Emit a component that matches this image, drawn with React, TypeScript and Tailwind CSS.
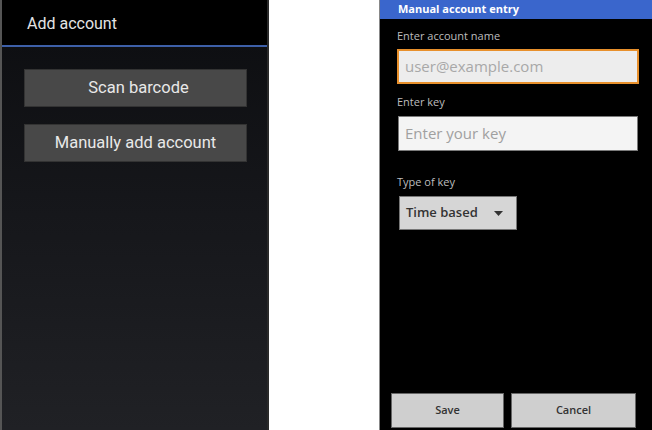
export default function App() {
  return (
    <div className="flex h-[430px] w-[652px] overflow-hidden bg-white">
      {/* left phone: add account */}
      <div className="flex h-full w-[269px] flex-col border-x-2 border-l-[#555] border-r-[#2a2a2a] bg-gradient-to-b from-[#0c0d10] via-[#16171b] to-[#202125] font-['Roboto',sans-serif]">
        <div className="flex h-[45px] items-center bg-black pl-[25px] pt-[2px] text-[16px] text-[#e4e4e4]">Add account</div>
        <div className="h-[2px] bg-[#3d5fa8]" />
        <div className="flex flex-col gap-[17px] pl-[22px] pt-[22px]">
          <button className="h-[38px] w-[223px] border border-[#333] bg-[#484848] pl-[6px] text-[16.5px] text-[#e8e8e8]">Scan barcode</button>
          <button className="h-[38px] w-[223px] border border-[#333] bg-[#484848] text-[16.5px] text-[#e8e8e8]">Manually add account</button>
        </div>
      </div>

      {/* right phone: manual entry */}
      <div className="ml-auto flex h-full w-[273px] flex-col border-l border-[#888] bg-black font-['Open_Sans',sans-serif]">
        <div className="flex h-[19px] items-center bg-[#3a66cc] pl-[18px] text-[11px] font-bold text-white">Manual account entry</div>
        <div className="flex flex-1 flex-col pl-[17px] pr-[13px]">
          <div className="pt-[9px] text-[11px] leading-[16px] text-[#bdbdbd]">Enter account name</div>
          <div className="mt-[5px] flex h-[35px] items-center border-2 border-[#e8902c] bg-[#ededed] pl-[6px] text-[15px] text-[#a8a8a8]">user@example.com</div>
          <div className="mt-[10px] text-[11px] leading-[16px] text-[#bdbdbd]">Enter key</div>
          <div className="mx-[1px] mt-[6px] flex h-[35px] items-center border border-[#7a7a7a] bg-[#f4f4f4] pl-[6px] text-[15px] text-[#a0a0a0]">Enter your key</div>
          <div className="mt-[23px] text-[11px] leading-[16px] text-[#bdbdbd]">Type of key</div>
          <div className="ml-[2px] mt-[6px] flex h-[34px] w-[118px] items-center justify-between border border-[#777] bg-[#d6d6d6] pl-[6px] pr-[13px] text-[13px] font-semibold text-[#333]">
            <span>Time based</span>
            <svg width="9" height="5" viewBox="0 0 9 5"><path d="M0 0h9L4.5 5z" fill="#333" /></svg>
          </div>
          <div className="-ml-[6px] mt-auto flex gap-[7px] pb-[2px]">
            <button className="h-[35px] w-[113px] border border-[#666] bg-[#cfcfcf] text-[11px] font-semibold text-[#333]">Save</button>
            <button className="h-[35px] w-[125px] border border-[#666] bg-[#cfcfcf] text-[11px] font-semibold text-[#333]">Cancel</button>
          </div>
        </div>
      </div>
    </div>
  );
}
